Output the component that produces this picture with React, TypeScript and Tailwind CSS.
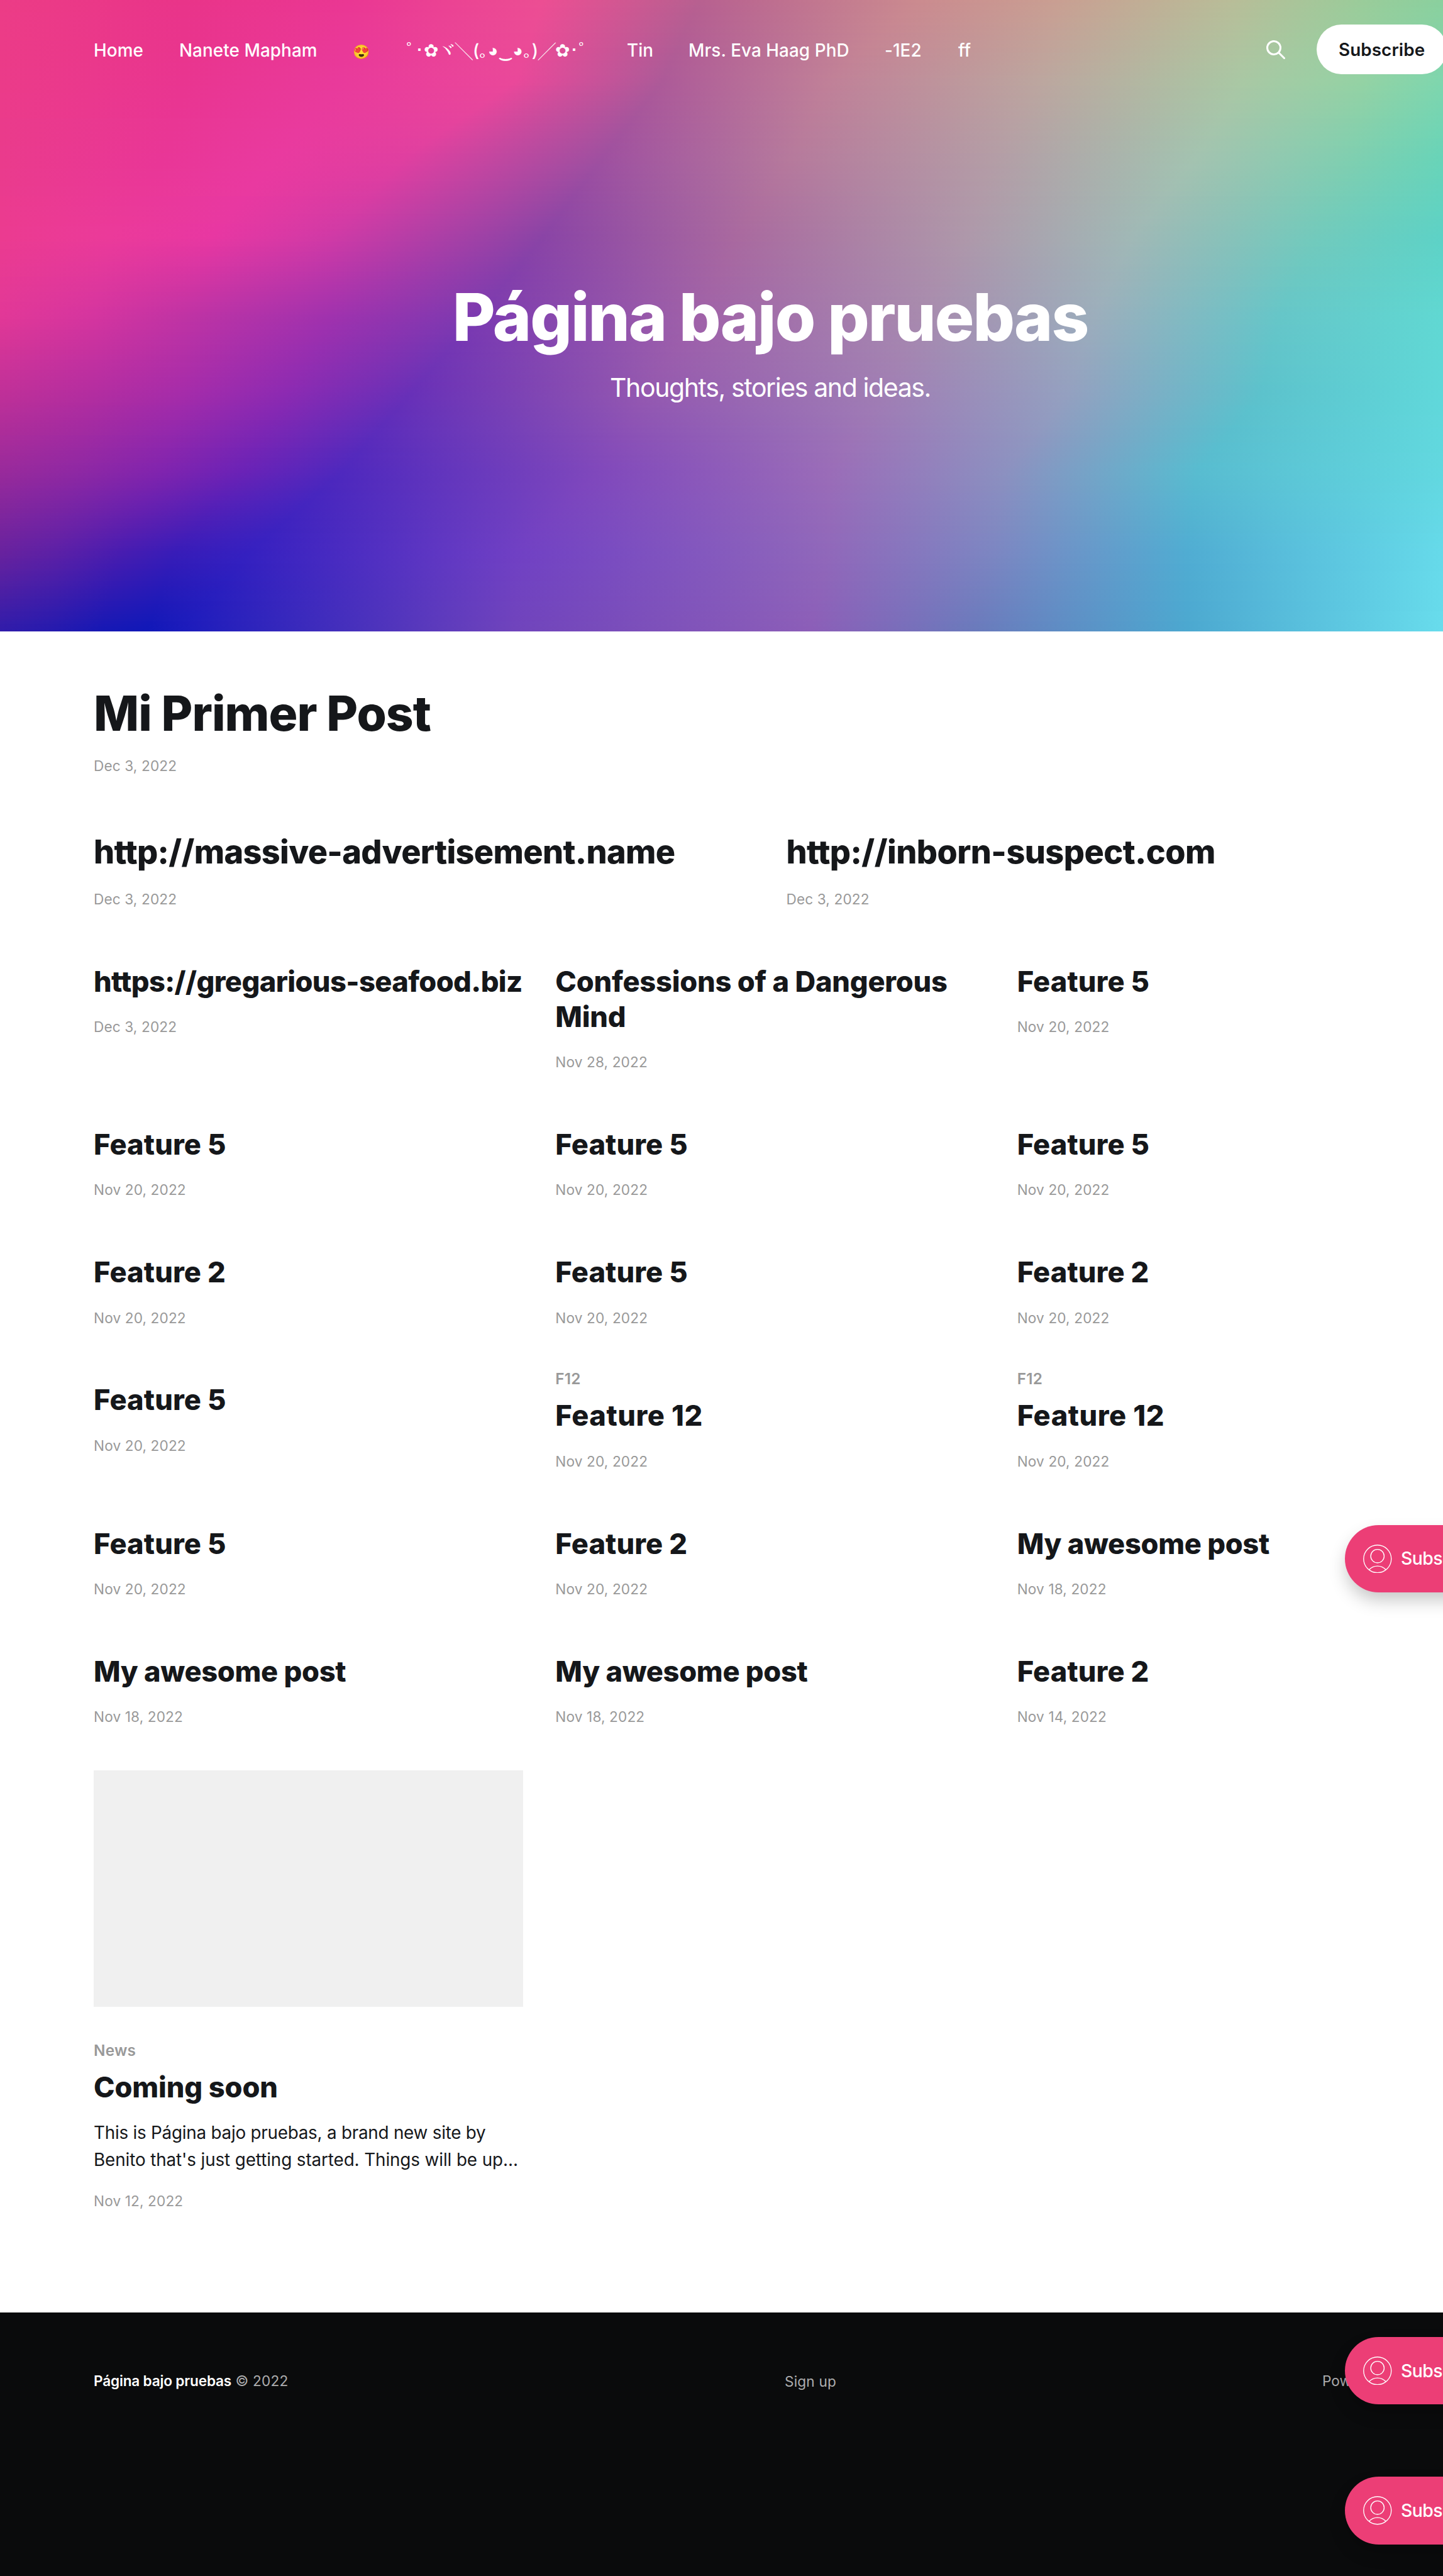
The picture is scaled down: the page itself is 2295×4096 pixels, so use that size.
import type { ReactNode } from "react";

type Stop = [number, string];

// Colour mesh of the cover: each row lists its stops from left to right.
const MESH: { y: number; stops: Stop[] }[] = [
  { y: 0, stops: [[0, "ec3c86"], [200, "e93489"], [380, "ea3793"], [590, "ec4e93"], [760, "b76090"], [1000, "cb8b8f"], [1150, "c99f92"], [1340, "b8bd98"], [1480, "9acc9a"], [1568, "8ad09e"]] },
  { y: 200, stops: [[0, "eb3b89"], [200, "e93590"], [370, "e93a9b"], [560, "ea489a"], [720, "ad5a98"], [900, "c08098"], [1130, "bca69f"], [1350, "a9c8a4"], [1480, "94d2a4"], [1568, "7ed6ae"]] },
  { y: 388, stops: [[0, "ea3b8c"], [180, "e93697"], [300, "e93a9f"], [440, "e03fa0"], [655, "9f50a0"], [860, "b67a9c"], [1080, "b49da6"], [1300, "a3c3b0"], [1470, "7fcfb0"], [1568, "68d4b8"]] },
  { y: 583, stops: [[0, "eb3b90"], [120, "eb3a9a"], [230, "e837a2"], [360, "d03aa6"], [590, "8a44a6"], [800, "a9699f"], [1050, "ae98aa"], [1230, "a0b8b6"], [1430, "72cabc"], [1568, "5dd2c6"]] },
  { y: 777, stops: [[0, "e23897"], [100, "d5359f"], [200, "c033a4"], [360, "a032ae"], [520, "7c3ab0"], [760, "a062a8"], [1000, "a88aae"], [1190, "9caebc"], [1390, "66c6c8"], [1568, "60d8d2"]] },
  { y: 971, stops: [[0, "bf3098"], [100, "b32da0"], [200, "a52caa"], [310, "8c2ab2"], [445, "6830b8"], [700, "9458b0"], [960, "a07eb4"], [1160, "94a0c0"], [1370, "5cc2cc"], [1568, "60d8da"]] },
  { y: 1165, stops: [[0, "982a9b"], [80, "8e28a3"], [170, "8024ae"], [260, "6a22b6"], [370, "4e28be"], [650, "8048bc"], [900, "9a6cb8"], [1090, "8c90c0"], [1300, "58bcd0"], [1568, "62d8e0"]] },
  { y: 1360, stops: [[0, "68229e"], [60, "5c20a6"], [130, "481cb0"], [190, "381cb8"], [270, "3520c0"], [560, "7040c4"], [900, "9068ba"], [1080, "7c86c2"], [1290, "50acd2"], [1568, "66daea"]] },
  { y: 1554, stops: [[0, "301caa"], [60, "241aae"], [110, "1618b4"], [160, "1018b8"], [200, "1c1cbc"], [560, "7044bc"], [880, "8c5eb8"], [1060, "6a7abc"], [1290, "4ca8d0"], [1568, "68dcec"]] },
];

const channels = (hex: string) => [0, 2, 4].map((i) => parseInt(hex.slice(i, i + 2), 16));

function rowAt(y: number) {
  let i = 0;
  while (i < MESH.length - 2 && MESH[i + 1].y < y) i++;
  const a = MESH[i];
  const b = MESH[i + 1];
  const t = (y - a.y) / (b.y - a.y);
  return a.stops.map(([x, c], n) => {
    const [x2, c2] = b.stops[n];
    const from = channels(c);
    const to = channels(c2);
    const rgb = from.map((v, m) => Math.round(v + (to[m] - v) * t));
    return { offset: (x + (x2 - x) * t) / 1568, color: `rgb(${rgb.join(",")})` };
  });
}

const STRIPS = 251;

function CoverArt() {
  const strips = Array.from({ length: STRIPS }, (_, i) => rowAt(((i + 0.5) / STRIPS) * 1554));
  return (
    <svg className="absolute inset-0 h-full w-full" viewBox={`0 0 1568 ${STRIPS}`} preserveAspectRatio="none" shapeRendering="crispEdges" aria-hidden="true">
      <defs>
        {strips.map((stops, i) => (
          <linearGradient key={i} id={`strip-${i}`}>
            {stops.map((s, n) => (
              <stop key={n} offset={s.offset} stopColor={s.color} />
            ))}
          </linearGradient>
        ))}
      </defs>
      {strips.map((_, i) => (
        <rect key={i} x="0" y={i} width="1568" height="1.3" fill={`url(#strip-${i})`} />
      ))}
    </svg>
  );
}

function NavItem({ width, children }: { width: string; children: ReactNode }) {
  return <li className={`${width} shrink-0 whitespace-nowrap`}>{children}</li>;
}

function Header() {
  return (
    <header className="relative h-[1004px] text-white">
      <CoverArt />
      <div className="relative flex h-full flex-col">
        <nav className="ml-[149px] mt-[39px] flex h-[79px] w-[2152px] items-center text-[27.8px] font-medium leading-[40px] tracking-[0.1px]">
          <ul className="flex pt-[4px]">
            <NavItem width="w-[136px]">Home</NavItem>
            <NavItem width="w-[276px]">Nanete Mapham</NavItem>
            <NavItem width="w-[85px]">
              <span className="text-[22px]">😍</span>
            </NavItem>
            <NavItem width="w-[351px]">
              <span className="font-['Inter',serif] tracking-[-0.2px]">ﾟ･✿ヾ╲(｡◕‿◕｡)╱✿･ﾟ</span>
            </NavItem>
            <NavItem width="w-[98px]">Tin</NavItem>
            <NavItem width="w-[312px]">Mrs. Eva Haag PhD</NavItem>
            <NavItem width="w-[117px]">-1E2</NavItem>
            <NavItem width="w-[40px]">ff</NavItem>
          </ul>
          <svg className="ml-auto mr-[47px] size-[36px] shrink-0" viewBox="0 0 24 24" fill="none" stroke="currentColor" strokeWidth="2" strokeLinecap="round" strokeLinejoin="round" aria-hidden="true">
            <path d="M21 21l-6-6m2-5a7 7 0 1 1-14 0 7 7 0 0 1 14 0z" />
          </svg>
          <a className="flex h-[79px] w-[207px] shrink-0 items-center rounded-full bg-white pl-[35px] font-semibold text-[#15171a]">Subscribe</a>
        </nav>
        <div className="mt-[326px] flex w-[2450px] flex-col items-center">
          <h1 className="text-[104.3px] font-extrabold leading-[120px] tracking-[-0.0187em]">Página bajo pruebas</h1>
          <p className="mt-[22px] text-[41px] leading-[60px] tracking-[-0.034em]">Thoughts, stories and ideas.</p>
        </div>
      </div>
    </header>
  );
}

type Post = { title: string; date: string; tag?: string; tracking?: string };

const ROWS: Post[] = [
  { title: "https://gregarious-seafood.biz", date: "Dec 3, 2022", tracking: "tracking-[-0.0132em]" },
  { title: "Confessions of a Dangerous Mind", date: "Nov 28, 2022", tracking: "tracking-[-0.005em]" },
  { title: "Feature 5", date: "Nov 20, 2022" },
  { title: "Feature 5", date: "Nov 20, 2022" },
  { title: "Feature 5", date: "Nov 20, 2022" },
  { title: "Feature 5", date: "Nov 20, 2022" },
  { title: "Feature 2", date: "Nov 20, 2022" },
  { title: "Feature 5", date: "Nov 20, 2022" },
  { title: "Feature 2", date: "Nov 20, 2022" },
  { title: "Feature 5", date: "Nov 20, 2022" },
  { title: "Feature 12", date: "Nov 20, 2022", tag: "F12", tracking: "tracking-[0.012em]" },
  { title: "Feature 12", date: "Nov 20, 2022", tag: "F12", tracking: "tracking-[0.012em]" },
  { title: "Feature 5", date: "Nov 20, 2022" },
  { title: "Feature 2", date: "Nov 20, 2022" },
  { title: "My awesome post", date: "Nov 18, 2022", tracking: "tracking-[-0.007em]" },
  { title: "My awesome post", date: "Nov 18, 2022", tracking: "tracking-[-0.007em]" },
  { title: "My awesome post", date: "Nov 18, 2022", tracking: "tracking-[-0.007em]" },
  { title: "Feature 2", date: "Nov 14, 2022" },
];

function PostDate({ className, children }: { className: string; children: ReactNode }) {
  return <time className={`${className} block text-[22.6px] leading-[30px] tracking-[0.006em] text-[#999999]`}>{children}</time>;
}

function Tag({ children }: { children: ReactNode }) {
  return <div className="mb-[18.2px] text-[24.3px] font-semibold leading-[25px] tracking-[0.01em] text-[#999999]">{children}</div>;
}

function PostCard({ post }: { post: Post }) {
  return (
    <article className={post.tag ? "-mt-[18.3px]" : ""}>
      {post.tag && <Tag>{post.tag}</Tag>}
      <h2 className={`${post.tracking ?? "tracking-[0.002em]"} text-[45.2px] font-extrabold leading-[56px]`}>{post.title}</h2>
      <PostDate className="mt-[29.3px]">{post.date}</PostDate>
    </article>
  );
}

function Feed() {
  return (
    <main className="ml-[149px] h-[2673px] w-[2152px] pt-[87.5px] text-[#15171a]">
      <article>
        <h2 className="text-[76.5px] font-extrabold leading-[84px] tracking-[-0.013em]">Mi Primer Post</h2>
        <PostDate className="mt-[27px]">Dec 3, 2022</PostDate>
      </article>
      <div className="mt-[90.4px] grid grid-cols-2 gap-x-[51px]">
        <article>
          <h2 className="text-[52.2px] font-extrabold leading-[62px] tracking-[-0.0127em]">http://massive-advertisement.name</h2>
          <PostDate className="mt-[30.2px]">Dec 3, 2022</PostDate>
        </article>
        <article>
          <h2 className="text-[52.2px] font-extrabold leading-[62px] tracking-[-0.0108em]">http://inborn-suspect.com</h2>
          <PostDate className="mt-[30.2px]">Dec 3, 2022</PostDate>
        </article>
      </div>
      <div className="mt-[87.8px] grid grid-cols-3 gap-x-[51px] gap-y-[87.9px]">
        {ROWS.map((post, i) => (
          <PostCard key={i} post={post} />
        ))}
        <article className="-mt-[18.3px]">
          <div className="h-[376px] bg-[#f0f0f0]" />
          <div className="mt-[57.2px]">
            <Tag>News</Tag>
          </div>
          <h2 className="text-[45.2px] font-extrabold leading-[56px] tracking-[-0.003em]">Coming soon</h2>
          <p className="mt-[23px] whitespace-nowrap text-[27.8px] leading-[43px]">
            <span className="block tracking-[-0.0081em]">This is Página bajo pruebas, a brand new site by</span>
            <span className="block tracking-[-0.0035em]">Benito that's just getting started. Things will be up…</span>
          </p>
          <PostDate className="mt-[28.6px]">Nov 12, 2022</PostDate>
        </article>
      </div>
    </main>
  );
}

function Footer() {
  return (
    <footer className="h-[419px] bg-[#0a0b0c] pl-[149px] pt-[94px] text-[22.6px] leading-[30px] text-[#adadae]">
      <div className="grid w-[2152px] grid-cols-[1099px_855px_auto] whitespace-nowrap">
        <div>
          <span className="font-semibold tracking-[-0.008em] text-white">Página bajo pruebas</span>{" "}
          <span className="tracking-[0.01em]">© 2022</span>
        </div>
        <div className="pt-px tracking-[0.008em]">Sign up</div>
        <div>Powered by Ghost</div>
      </div>
    </footer>
  );
}

function SubscribePill({ place }: { place: string }) {
  return (
    <div className={`${place} absolute left-[2139px] flex h-[107.6px] w-[290px] items-center rounded-full bg-[#ec3e76] pl-[29px] text-white shadow-[0_14px_29px_-3px_rgba(0,0,0,0.24)]`}>
      <svg className="size-[45.5px] shrink-0" viewBox="0 0 50.7 50.7" fill="none" stroke="currentColor" strokeWidth="1.5" aria-hidden="true">
        <circle cx="25.35" cy="25.35" r="24.5" />
        <circle cx="25.35" cy="20.4" r="11.9" />
        <path d="M10.4 44.6C14.6 40 19.5 38 25.35 38s10.8 2 14.95 6.6" />
      </svg>
      <span className="ml-[14.5px] text-[28.4px] font-medium leading-[40px] tracking-[-0.019em]">Subscribe</span>
    </div>
  );
}

export default function App() {
  return (
    <div className="relative h-[4096px] w-[2295px] overflow-hidden bg-white font-['Inter',sans-serif]">
      <Header />
      <Feed />
      <Footer />
      <SubscribePill place="top-[2424.6px]" />
      <SubscribePill place="top-[3715.8px]" />
      <SubscribePill place="top-[3938.2px]" />
    </div>
  );
}
